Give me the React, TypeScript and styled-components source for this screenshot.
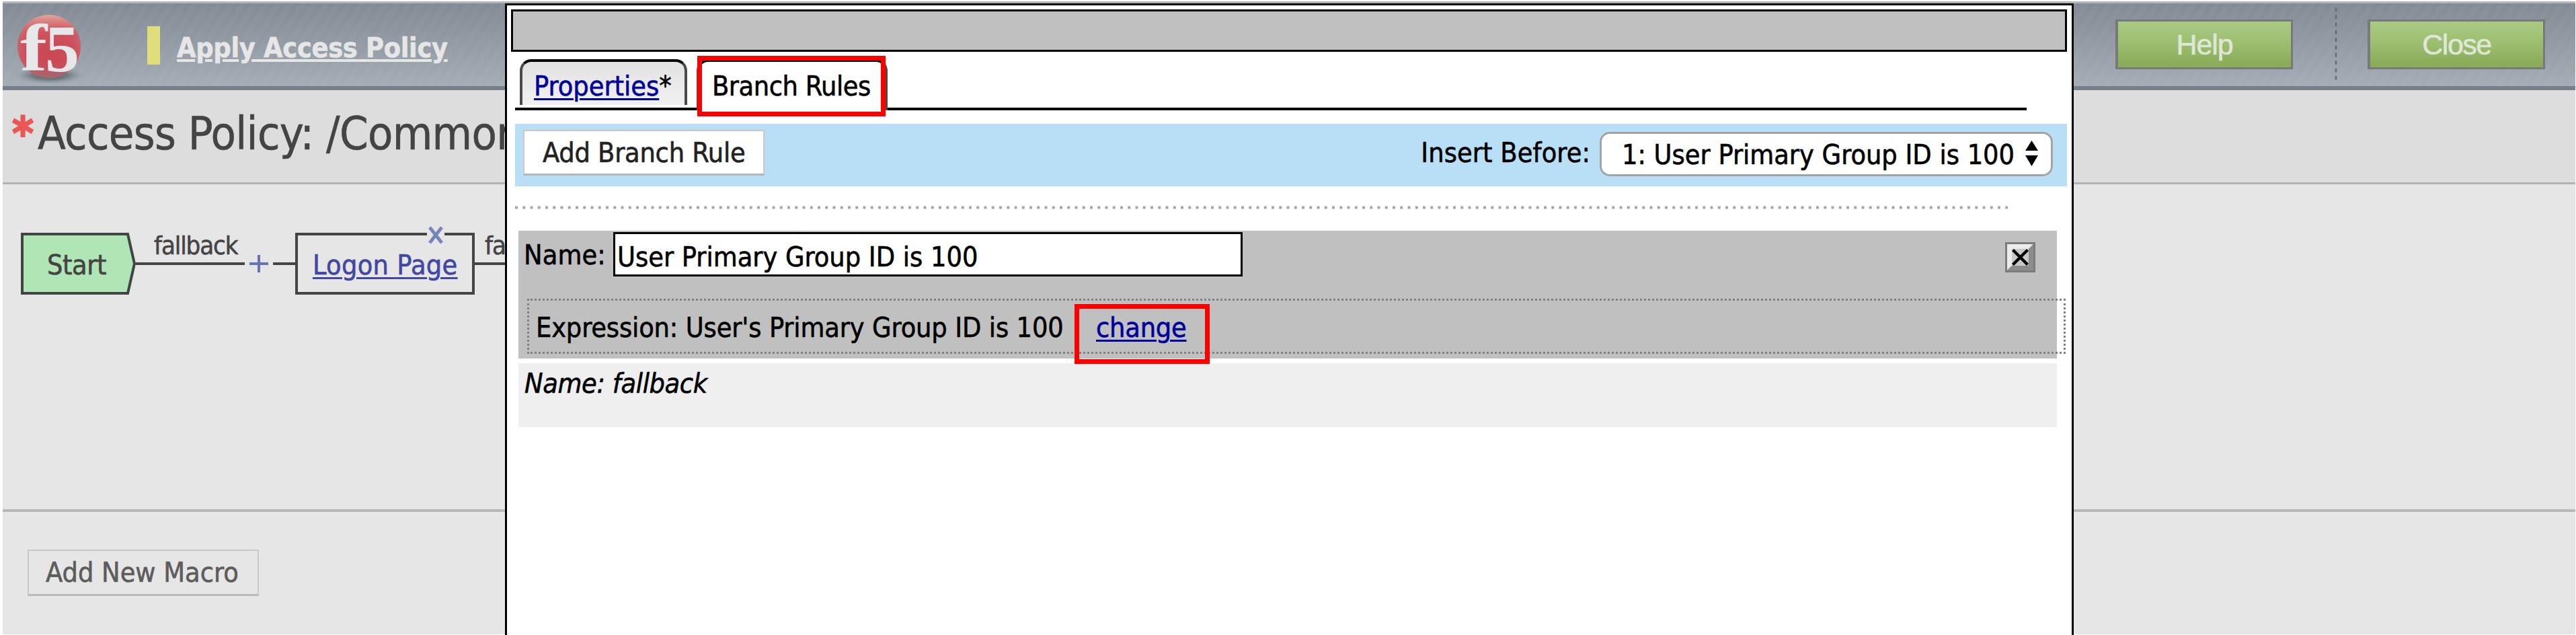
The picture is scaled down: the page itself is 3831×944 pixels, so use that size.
import React from "react";
import styled, { createGlobalStyle } from "styled-components";

const GlobalStyle = createGlobalStyle`
  html, body { margin: 0; background: #fff; }
  body {
    font-family: "DejaVu Sans Condensed", "DejaVu Sans", Tahoma, sans-serif;
    font-size: 41px;
    line-height: 48px;
    color: #000;
    -webkit-text-stroke: 0.6px currentColor;
  }
  *, *::before, *::after { box-sizing: border-box; }
`;

const Page = styled.div`
  position: relative;
  width: 3831px;
  height: 944px;
  padding: 2px 1px 1px 4px;
  display: flex;
  flex-direction: column;
  overflow: hidden;
  background: #fff;
`;

/* Spacing between letters is tuned per label */
const Label = styled.span<{ $track?: number }>`
  letter-spacing: ${(p) => p.$track ?? 0}px;
  white-space: pre;
`;

const Link = styled.a<{ $track?: number }>`
  color: #00009b;
  letter-spacing: ${(p) => p.$track ?? 0}px;
  white-space: pre;
  text-decoration: underline;
  text-decoration-thickness: 3px;
  text-underline-offset: 4px;
`;

/* ---------- Header ---------- */

const Header = styled.header`
  flex: none;
  height: 132px;
  display: flex;
  align-items: flex-start;
  border-top: 3px solid #b5b5b7;
  border-bottom: 6px solid #75808b;
  background:
    repeating-linear-gradient(122deg, rgba(255, 255, 255, 0.025) 0 6px, rgba(255, 255, 255, 0) 9px 12px, rgba(255, 255, 255, 0.025) 15px),
    linear-gradient(#828b94, #939ba5 50%, #a4acb4);
`;

const Logo = styled.svg`
  display: block;
  flex: none;
  width: 140px;
  height: 123px;
`;

const StatusBar = styled.div`
  width: 19px;
  height: 57px;
  margin: 34px 25px 0 75px;
  background: #dede7b;
`;

const ApplyLink = styled.a`
  margin-top: 42px;
  color: #e6e6e6;
  font-weight: bold;
  letter-spacing: -0.3px;
  text-decoration: underline;
  text-decoration-thickness: 4px;
  text-underline-offset: 3px;
`;

const HeaderActions = styled.div`
  display: flex;
  align-items: flex-start;
  margin-left: auto;
  padding-right: 45px;
`;

const GreenButton = styled.button<{ $track: number }>`
  width: 264px;
  height: 74px;
  margin-top: 24px;
  padding: 0;
  border: 3px solid #777a79;
  border-left-width: 4px;
  background: linear-gradient(#abcb82, #9dbf71 45%, #8bad5a 90%);
  color: #dfe7d6;
  font: 43px/64px "Liberation Sans", Arial, sans-serif;
  letter-spacing: ${(p) => p.$track}px;
`;

const HeaderDivider = styled.svg`
  width: 4px;
  height: 108px;
  margin: 6px 45px 0 62px;
`;

/* ---------- Policy page ---------- */

const TitleBar = styled.div`
  flex: none;
  height: 140px;
  padding: 25px 0 0 14px;
  display: flex;
  border-bottom: 3px solid #b3b3b3;
  background: #ddd;
  color: #444;
  font-size: 68px;
  line-height: 80px;
  letter-spacing: -0.7px;
  white-space: pre;
`;

const Modified = styled.span`
  width: 38px;
  color: #eb5757;
  font-weight: bold;
  letter-spacing: 0;
  -webkit-text-stroke: 2px currentColor;
`;

const Canvas = styled.div`
  flex: none;
  height: 487px;
  padding: 72px 0 0 27px;
  display: flex;
  align-items: flex-start;
  border-bottom: 4px solid #b8b8b8;
  background: #e6e6e6;
  color: #444;
`;

const StartNode = styled.div`
  position: relative;
  width: 171px;
  height: 92px;
  padding: 0 0 0 39px;
  line-height: 96px;
`;

const StartShape = styled.svg`
  position: absolute;
  inset: 0;
`;

const StartText = styled(Label)`
  position: relative;
`;

const Branch = styled.div<{ $width: number; $indent: number }>`
  width: ${(p) => p.$width}px;
  height: 48px;
  padding-left: ${(p) => p.$indent}px;
  border-bottom: 4px solid #444;
  font-size: 38px;
  line-height: 38px;
`;

const PlusIcon = styled.svg`
  width: 42px;
  height: 92px;
`;

const Wire = styled.div`
  width: 33px;
  height: 48px;
  border-bottom: 4px solid #444;
`;

const ActionNode = styled.div`
  position: relative;
  width: 267px;
  height: 92px;
  border: 4px solid #444;
  padding-left: 22px;
  line-height: 88px;
`;

const NodeLink = styled(Link)`
  color: #4246a5;
`;

const RemoveMark = styled.svg`
  position: absolute;
  left: 192px;
  top: -19px;
  width: 26px;
  height: 36px;
  background: #e6e6e6;
`;

const MacroBar = styled.div`
  flex: 1;
  padding: 56px 0 0 37px;
  background: #e6e6e6;
`;

const MacroButton = styled.button`
  display: block;
  width: 344px;
  height: 69px;
  padding: 0 0 0 25px;
  border: 2px solid #c8c8c8;
  border-bottom: 3px solid #b9b9b9;
  background: #e6e6e6;
  color: #5c5c5c;
  font: inherit;
  text-align: left;
`;

/* ---------- Dialog ---------- */

const Dialog = styled.section`
  position: absolute;
  left: 751px;
  top: 5px;
  width: 2333px;
  height: 939px;
  padding: 6px 7px 0 6px;
  display: flex;
  flex-direction: column;
  border: 3px solid #000;
  border-bottom: 0;
  background: #fff;
`;

const DialogTitle = styled.div`
  flex: none;
  height: 63px;
  border: 3px solid #000;
  background: #c0c0c0;
`;

const Tabs = styled.nav`
  flex: none;
  display: flex;
  align-items: flex-start;
  gap: 14px;
  width: 2248px;
  height: 76px;
  margin: 11px 0 0 6px;
  padding-left: 7px;
  border-bottom: 4px solid #000;
`;

const Tab = styled.div<{ $active?: boolean }>`
  position: relative;
  flex: none;
  width: ${(p) => (p.$active ? 284 : 249)}px;
  height: ${(p) => (p.$active ? 76 : 68)}px;
  padding: 12px 0 0 ${(p) => (p.$active ? 19 : 17)}px;
  border: 4px solid #4a4a4a;
  border-top-color: #000;
  border-bottom: 0;
  border-radius: 17px 17px 0 0;
  background: ${(p) => (p.$active ? "#fff" : "linear-gradient(#e2e2e2, #f1f1f1)")};
`;

const Highlight = styled.div<{ $x: number; $y: number; $w: number; $h: number }>`
  position: absolute;
  left: ${(p) => p.$x}px;
  top: ${(p) => p.$y}px;
  width: ${(p) => p.$w}px;
  height: ${(p) => p.$h}px;
  border: 7px solid #f00;
`;

const Toolbar = styled.div`
  flex: none;
  height: 93px;
  margin: 20px 0 0 6px;
  padding: 9px 21px 0 12px;
  display: flex;
  align-items: flex-start;
  background: #b9dff7;
`;

const AddButton = styled.button`
  width: 359px;
  height: 68px;
  padding: 0 0 0 27px;
  border: 2px solid #c9c9c9;
  border-bottom: 3px solid #b5b5b5;
  background: #fff;
  color: #222;
  font: inherit;
  text-align: left;
`;

const InsertLabel = styled.label`
  margin: 10px 14px 0 auto;
  letter-spacing: 0.1px;
`;

const Picker = styled.button`
  width: 674px;
  height: 66px;
  margin-top: 3px;
  padding: 2px 19px 0 30px;
  display: flex;
  align-items: center;
  justify-content: space-between;
  border: 3px solid #a3a3a3;
  border-radius: 15px;
  background: #fff;
  color: #000;
  font: inherit;
  line-height: 48px;
`;

const Arrows = styled.svg`
  width: 19px;
  height: 38px;
  margin-bottom: 4px;
`;

const DottedRule = styled.svg`
  flex: none;
  display: block;
  width: 2220px;
  height: 5px;
  margin: 29px 0 0 6px;
`;

const Rule = styled.div`
  flex: none;
  height: 190px;
  margin: 32px 15px 0 11px;
  background: #c0c0c0;
`;

const NameRow = styled.div`
  display: flex;
  align-items: flex-start;
  height: 101px;
  padding: 2px 32px 0 8px;
`;

const NameLabel = styled.label`
  width: 133px;
  padding-top: 10px;
  letter-spacing: 0.1px;
`;

const NameInput = styled.input`
  width: 936px;
  height: 66px;
  padding: 7px 0 0 3px;
  border: 3px solid #000;
  border-radius: 0;
  background: #fff;
  color: #000;
  font: inherit;
  line-height: 48px;
`;

const DeleteIcon = styled.svg`
  width: 45px;
  height: 45px;
  margin: 15px 0 0 auto;
`;

const Expression = styled.div`
  position: relative;
  width: 2288px;
  height: 82px;
  margin-left: 13px;
  padding: 16px 0 0 10px;
  display: flex;
  border: 3px dotted #808080;
`;

const ExpressionText = styled(Label)`
  width: 833px;
`;

const FallbackRule = styled.div`
  flex: none;
  height: 95px;
  margin: 7px 15px 0 11px;
  padding: 6px 0 0 9px;
  background: #efefef;
  font-style: italic;
  letter-spacing: -0.35px;
`;

const BrandLogo = () => (
  <Logo viewBox="4 5 140 123" role="img" aria-label="f5">
    <defs>
      <radialGradient id="ball" cx="0.5" cy="0.55" r="0.55">
        <stop offset="0" stopColor="#c94650" />
        <stop offset="0.7" stopColor="#cf4b5a" />
        <stop offset="1" stopColor="#c46a70" />
      </radialGradient>
      <linearGradient id="gloss" x1="0" y1="0" x2="0" y2="1">
        <stop offset="0" stopColor="#e3a69c" />
        <stop offset="0.3" stopColor="#d4626a" stopOpacity="0.3" />
        <stop offset="0.75" stopColor="#b9606a" stopOpacity="0" />
        <stop offset="1" stopColor="#8f7076" stopOpacity="0.8" />
      </linearGradient>
      <radialGradient id="shade">
        <stop offset="0" stopColor="#59626a" />
        <stop offset="0.5" stopColor="#646d76" stopOpacity="0.8" />
        <stop offset="1" stopColor="#8c959e" stopOpacity="0" />
      </radialGradient>
    </defs>
    <ellipse cx="74" cy="112" rx="52" ry="13" fill="url(#shade)" />
    <circle cx="73" cy="69" r="47" fill="url(#ball)" />
    <circle cx="73" cy="69" r="47" fill="url(#gloss)" />
    <g fill="#e6e7e8" fontFamily="Liberation Serif, serif" fontWeight="bold">
      <text transform="translate(30 105) scale(1.22 1)" fontSize="99">f</text>
      <text transform="translate(67 106) scale(1.03 1)" fontSize="99">5</text>
    </g>
  </Logo>
);

export default function App() {
  return (
    <Page>
      <GlobalStyle />
      <Header>
        <BrandLogo />
        <StatusBar />
        <ApplyLink>Apply Access Policy</ApplyLink>
        <HeaderActions>
          <GreenButton $track={-1.1}>Help</GreenButton>
          <HeaderDivider viewBox="0 0 4 108">
            <path d="M2 0V108" stroke="#646d76" strokeWidth="2.5" strokeDasharray="6 5.3" />
          </HeaderDivider>
          <GreenButton $track={-1.5}>Close</GreenButton>
        </HeaderActions>
      </Header>

      <TitleBar>
        <Modified>*</Modified>
        <span>Access Policy: /Common</span>
      </TitleBar>

      <Canvas>
        <StartNode>
          <StartShape width="171" height="92" viewBox="0 0 171 92">
            <path d="M2 2H159L169 46L159 90H2Z" fill="#b0e6b6" stroke="#444" strokeWidth="4" />
          </StartShape>
          <StartText $track={-0.4}>Start</StartText>
        </StartNode>
        <Branch $width={162} $indent={27}>
          <Label $track={-1.1}>fallback</Label>
        </Branch>
        <PlusIcon viewBox="0 0 42 92">
          <path d="M7 46H35M21 33V59" stroke="#6674b4" strokeWidth="4" />
        </PlusIcon>
        <Wire />
        <ActionNode>
          <NodeLink $track={0.3}>Logon Page</NodeLink>
          <RemoveMark viewBox="0 0 26 36">
            <path d="M4 7L22 30M22 7L4 30" stroke="#7784bb" strokeWidth="5" />
          </RemoveMark>
        </ActionNode>
        <Branch $width={46} $indent={15}>
          <Label $track={-1.1}>fa</Label>
        </Branch>
      </Canvas>

      <MacroBar>
        <MacroButton>Add New Macro</MacroButton>
      </MacroBar>

      <Dialog>
        <DialogTitle />
        <Tabs>
          <Tab>
            <Link>Properties</Link>*
          </Tab>
          <Tab $active>
            <Label $track={-0.45}>Branch Rules</Label>
            <Highlight $x={-3} $y={-9} $w={280} $h={90} />
          </Tab>
        </Tabs>

        <Toolbar>
          <AddButton>
            <Label $track={-0.24}>Add Branch Rule</Label>
          </AddButton>
          <InsertLabel>Insert Before:</InsertLabel>
          <Picker>
            <Label>1: User Primary Group ID is 100</Label>
            <Arrows viewBox="0 0 19 38">
              <path d="M9.5 0L19 15H0ZM0 22H19L9.5 38Z" fill="#000" />
            </Arrows>
          </Picker>
        </Toolbar>

        <DottedRule viewBox="0 0 2220 5">
          <path d="M0 2.5H2220" stroke="#a6a6a6" strokeWidth="4" strokeDasharray="4 7.25" />
        </DottedRule>

        <Rule>
          <NameRow>
            <NameLabel>Name:</NameLabel>
            <NameInput defaultValue="User Primary Group ID is 100" />
            <DeleteIcon viewBox="0 0 45 45">
              <path d="M0 0H45V45H0Z" fill="#7c7c7c" />
              <path d="M3 3H42L35 10V35H10L3 42Z" fill="#ececec" />
              <path d="M42 3V42H3L10 35H35V10Z" fill="#8c8c8c" />
              <path d="M10 10H35V35H10Z" fill="#c9c9c9" />
              <path d="M11.5 11.5L33.5 33.5M33.5 11.5L11.5 33.5" stroke="#000" strokeWidth="4.5" />
            </DeleteIcon>
          </NameRow>
          <Expression>
            <ExpressionText $track={-0.13}>Expression: User's Primary Group ID is 100</ExpressionText>
            <Link $track={-0.2}>change</Link>
            <Highlight $x={811} $y={5} $w={201} $h={89} />
          </Expression>
        </Rule>

        <FallbackRule>Name: fallback</FallbackRule>
      </Dialog>
    </Page>
  );
}
